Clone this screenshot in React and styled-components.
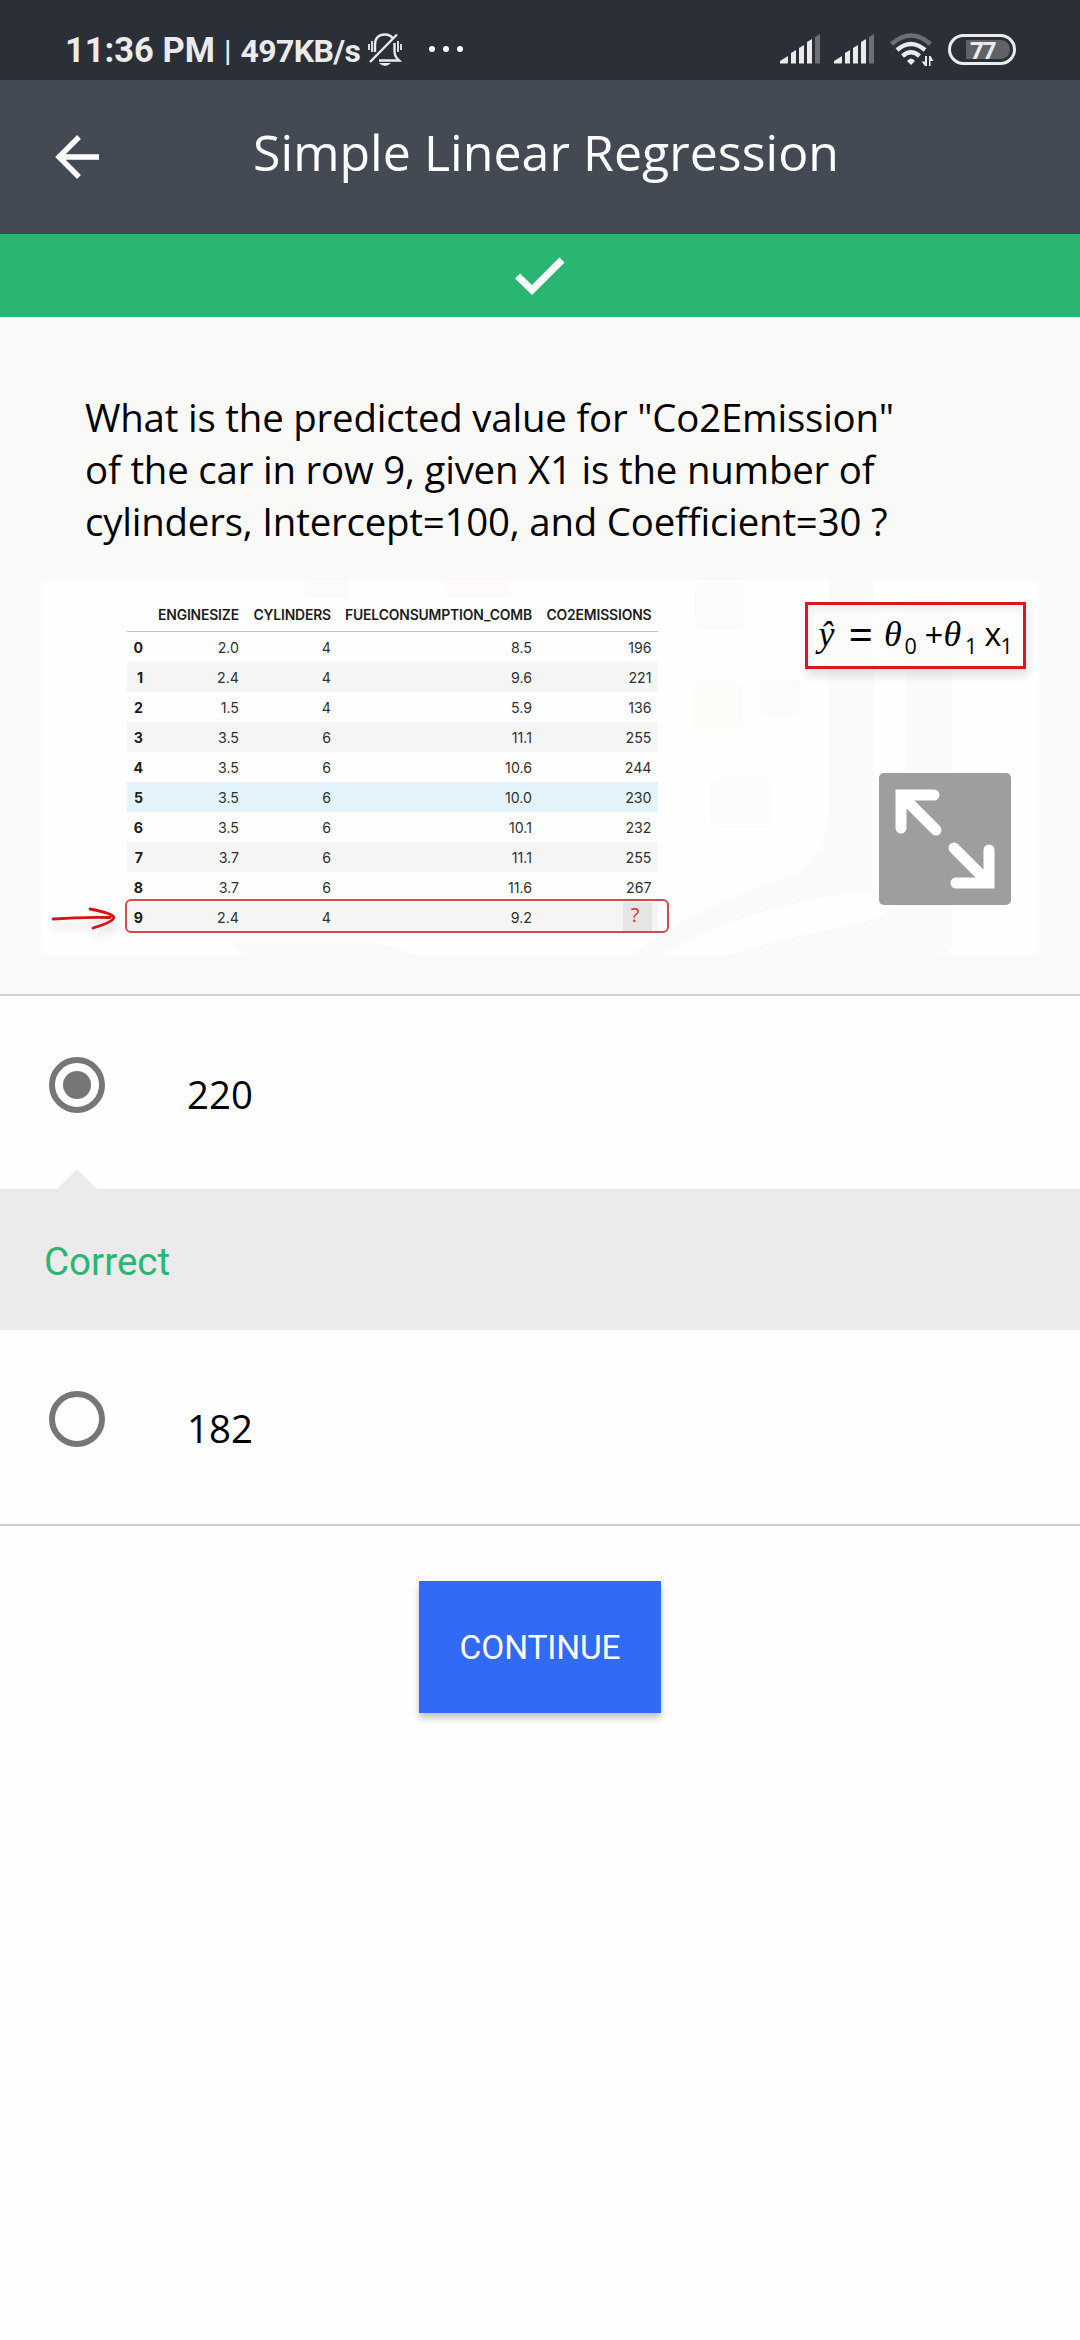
import React from "react";
import styled, { createGlobalStyle } from "styled-components";

const Global = createGlobalStyle`
  * { box-sizing: border-box; }
  body { margin: 0; background: #fefefe; }
`;

const Screen = styled.div`
  width: 1080px;
  min-height: 2340px;
  display: flex;
  flex-direction: column;
  background: #fefefe;
  font-family: "Open Sans", sans-serif;
  color: #000;
`;

const StatusBar = styled.header`
  height: 80px;
  padding: 20px 64px 0 65px;
  display: flex;
  align-items: center;
  justify-content: space-between;
  background: #2b2f37;
`;

const StatusGroup = styled.div`
  height: 60px;
  display: flex;
  align-items: center;
  padding-bottom: 2px;
`;

const StatusText = styled.span`
  font: ${(p) => p.$weight || 700} ${(p) => p.$size}px/40px Roboto, sans-serif;
  letter-spacing: ${(p) => p.$track || 0}px;
  margin-right: ${(p) => p.$gap || 0}px;
  padding-top: ${(p) => p.$drop || 0}px;
  color: #ebebeb;
  white-space: pre;
`;

const Glyph = styled.svg`
  display: block;
  flex: none;
  overflow: visible;
  margin-left: ${(p) => p.$ml || 0}px;
`;

const Battery = styled.div`
  width: 68px;
  height: 31px;
  margin-left: 15px;
  padding: 3px;
  display: flex;
  justify-content: flex-end;
  align-items: center;
  border: 3px solid #ebebeb;
  border-radius: 16px;
`;

const BatteryFill = styled.div`
  width: 44px;
  height: 19px;
  padding-left: 4px;
  border-radius: 1px 9px 9px 1px;
  background: #5f6267;
  color: #ebebeb;
  font: 700 24px/19px "Open Sans", sans-serif;
  letter-spacing: -1.2px;
`;

const AppBar = styled.div`
  height: 154px;
  padding-left: 55px;
  display: flex;
  background: #444a53;
`;

const BackIcon = styled(Glyph)`
  margin-top: 55px;
`;

const Title = styled.h1`
  margin: 38px 0 0 154px;
  font-weight: 400;
  font-size: 50px;
  line-height: 68px;
  letter-spacing: 0.05px;
  color: #fff;
  white-space: nowrap;
`;

const ResultBar = styled.div`
  height: 83px;
  display: flex;
  align-items: center;
  justify-content: center;
  background: #2bb573;
`;

const Question = styled.section`
  height: 679px;
  padding: 74px 41px 0;
  background: #f9f9f7;
  border-bottom: 2px solid #cfcfcd;
`;

const Prompt = styled.p`
  margin: 0 0 33px;
  padding-left: 44px;
  font-size: 38.4px;
  line-height: 52px;
  letter-spacing: -0.2px;
  white-space: pre-line;
`;

const Figure = styled.div`
  position: relative;
  width: 998px;
  height: 375px;
  padding: 20px 0 0 86px;
  background: #fefefe;
`;

const Backdrop = styled.svg`
  position: absolute;
  inset: 0;
`;

const Row = styled.div`
  position: relative;
  display: grid;
  grid-template-columns: 16px 96px 92px 201px 119.5px;
  width: 531px;
  height: ${(p) => (p.$head ? 32 : 30)}px;
  font: ${(p) => (p.$head ? "13.9px/31px" : "14.2px/31px")} Inter, sans-serif;
  color: #303030;
  text-align: right;
  background: ${(p) => p.$bg || "transparent"};
  border-bottom: ${(p) => (p.$head ? "1px solid #c4c4c4" : "0")};
`;

const Cell = styled.span`
  display: flex;
  justify-content: flex-end;
  white-space: nowrap;
  font-weight: ${(p) => p.$weight || 400};
  letter-spacing: ${(p) => (p.$weight === 600 ? "-0.15px" : "0")};
  color: ${(p) => (p.$weight ? "#1c1c1c" : "inherit")};
`;

const Unknown = styled.span`
  justify-self: end;
  width: 29px;
  height: 29px;
  padding-right: 4px;
  text-align: center;
  background: #e6e5e5;
  color: #d93030;
  font: 400 20px/26px "Open Sans", sans-serif;
`;

const RowOutline = styled.div`
  position: absolute;
  left: 84px;
  top: 319px;
  width: 544px;
  height: 34px;
  border: 2px solid #cf4c4f;
  border-radius: 6px;
`;

const Arrow = styled.svg`
  position: absolute;
  left: 9px;
  top: 322px;
  overflow: visible;
  filter: drop-shadow(1px 8px 5px rgba(0, 0, 0, 0.15));
`;

const Formula = styled.div`
  position: absolute;
  left: 764px;
  top: 22px;
  width: 221px;
  height: 67px;
  border: 3px solid #d8181e;
  background: rgba(252, 253, 253, 0.8);
  box-shadow: 2px 7px 9px rgba(0, 0, 0, 0.11), inset 1px 5px 9px rgba(0, 0, 0, 0.06);
`;

const FormulaText = styled.text`
  font-family: ${(p) => (p.$math ? '"Liberation Serif", serif' : '"Open Sans", sans-serif')};
  font-style: ${(p) => (p.$math ? "italic" : "normal")};
  font-size: ${(p) => p.$size}px;
`;

const Expand = styled.button`
  position: absolute;
  left: 838px;
  top: 193px;
  width: 132px;
  height: 132px;
  padding: 0;
  border: 0;
  border-radius: 5px;
  background: rgba(140, 140, 140, 0.84);
`;

const Option = styled.label`
  height: ${(p) => p.$height}px;
  padding: ${(p) => p.$top}px 0 0 49px;
  display: flex;
  background: #fefefe;
  border-bottom: ${(p) => (p.$last ? "2px solid #cdcdcd" : "0")};
`;

const Radio = styled.span`
  width: 56px;
  height: 56px;
  flex: none;
  display: grid;
  place-items: center;
  border: 6px solid #767676;
  border-radius: 50%;
  &::after {
    content: "";
    width: 28px;
    height: 28px;
    border-radius: 50%;
    background: ${(p) => (p.$on ? "#767676" : "transparent")};
  }
`;

const OptionText = styled.span`
  margin: 10px 0 0 82px;
  font-size: 38.4px;
  line-height: 54px;
`;

const Feedback = styled.div`
  position: relative;
  height: 141px;
  padding: 50px 0 0 44px;
  background: #ebebeb;
  color: #2bb573;
  font: 400 38.6px/46px Roboto, sans-serif;
  &::before {
    content: "";
    position: absolute;
    left: 57px;
    top: -20px;
    border: 20px solid transparent;
    border-top: 0;
    border-bottom-color: #ebebeb;
  }
`;

const Continue = styled.button`
  align-self: center;
  width: 242px;
  height: 132px;
  margin-top: 55px;
  padding: 2px 0 0;
  border: 0;
  background: #316af5;
  color: #fff;
  font: 400 33.5px/40px Roboto, sans-serif;
  letter-spacing: -0.15px;
  box-shadow: 0 5px 7px rgba(0, 0, 0, 0.24);
`;

const rows = [
  ["2.0", "4", "8.5", "196"],
  ["2.4", "4", "9.6", "221"],
  ["1.5", "4", "5.9", "136"],
  ["3.5", "6", "11.1", "255"],
  ["3.5", "6", "10.6", "244"],
  ["3.5", "6", "10.0", "230"],
  ["3.5", "6", "10.1", "232"],
  ["3.7", "6", "11.1", "255"],
  ["3.7", "6", "11.6", "267"],
  ["2.4", "4", "9.2", "?"],
];
const headings = ["ENGINESIZE", "CYLINDERS", "FUELCONSUMPTION_COMB", "CO2EMISSIONS"];

const rowColor = (i) => (i === 5 ? "#e3f4fc" : i % 2 ? "#f5f5f5" : undefined);

function Signal({ ml }) {
  return (
    <Glyph $ml={ml} width="40" height="30" viewBox="0 0 40 30">
      <g fill="#ebebeb">
        <path d="M0 27L8 22V28.5Q8 29.5 7 29.5H0Z" />
        <path d="M11 19L16 16V29.5H11Z" />
        <path d="M19 14L24 11V29.5H19Z" />
        <path d="M27 8L32 5V29.5H27Z" />
      </g>
      <path d="M35 3L40 0V29.5H35Z" fill="#6c6f74" />
    </Glyph>
  );
}

export default function App() {
  return (
    <Screen>
      <Global />
      <StatusBar>
        <StatusGroup>
          <StatusText $size={34.5} $gap={9} $drop={2}>11:36 PM</StatusText>
          <StatusText $size={30} $gap={9} $drop={3} $weight={500}>|</StatusText>
          <StatusText $size={32} $track={-0.6} $drop={4}>497KB/s</StatusText>
          <Glyph $ml={8} width="34" height="33" viewBox="0 0 34 33">
            <g fill="none" stroke="#ebebeb" strokeWidth="2.4">
              <path d="M7 19V12Q7 1.5 17 1.5Q22 1.5 24.5 5M26.5 10V19Q27 24 31 27.5H11M2 29L29 1.5" />
              <path d="M1 11V17M4 8V19M30 8V19M33 11V17" strokeWidth="1.8" />
            </g>
            <path d="M11 30H23Q17 36 11 30Z" fill="#ebebeb" />
          </Glyph>
          <Glyph $ml={27} width="34" height="8" viewBox="0 0 34 8" fill="#fff">
            <circle cx="3" cy="4" r="3" />
            <circle cx="17" cy="4" r="3" />
            <circle cx="31" cy="4" r="3" />
          </Glyph>
        </StatusGroup>
        <StatusGroup>
          <Signal />
          <Signal ml={14} />
          <Glyph $ml={16} width="43" height="33" viewBox="0 0 43 33">
            <g fill="none" strokeWidth="4.4">
              <path d="M1.5 11Q21 -6 40.5 11" stroke="#6c6f74" />
              <path d="M7 17Q21 5 35 17" stroke="#ebebeb" />
              <path d="M12.5 23Q21 15.5 29.5 23" stroke="#ebebeb" />
            </g>
            <path d="M17 28Q21 23 25 28L21 32Z" fill="#ebebeb" />
            <path d="M35 23V33H37V23ZM39 23H40.5V33H39ZM31.5 28.5H35V33ZM40.5 23L43.5 28H40.5Z" fill="#ebebeb" />
          </Glyph>
          <Battery>
            <BatteryFill>77</BatteryFill>
          </Battery>
        </StatusGroup>
      </StatusBar>

      <AppBar>
        <BackIcon width="44" height="44" viewBox="0 0 44 44">
          <path d="M24 2L4 22L24 42M4 22H44" fill="none" stroke="#fff" strokeWidth="5.4" />
        </BackIcon>
        <Title>Simple Linear Regression</Title>
      </AppBar>

      <ResultBar>
        <Glyph width="50" height="38" viewBox="0 0 50 38">
          <path d="M2.5 19L17 33L47 3" fill="none" stroke="#fff" strokeWidth="7.2" />
        </Glyph>
      </ResultBar>

      <Question>
        <Prompt>
          {'What is the predicted value for "Co2Emission"\nof the car in row 9, given X1 is the number of\ncylinders, Intercept=100, and Coefficient=30 ?'}
        </Prompt>
        <Figure>
          <Backdrop width="998" height="375" viewBox="0 0 998 375">
            <rect x="264" width="44" height="18" fill="#fbfbfb" />
            <rect x="404" width="65" height="17" fill="#fefafb" />
            <rect x="653" y="3" width="51" height="46" rx="8" fill="#fdfafb" />
            <rect x="650" y="102" width="52" height="48" rx="8" fill="#fcfcf8" />
            <rect x="718" y="99" width="40" height="37" rx="7" fill="#fdfafb" />
            <rect x="670" y="198" width="62" height="50" rx="8" fill="#fcfcfc" />
            <path d="M788 0H833V310C770 318 700 330 620 375H590C660 325 710 310 755 294Q780 280 788 240Z" fill="#fafafa" />
            <path d="M865 20H911V364Q908 375 895 375H690C760 350 820 350 850 330Q865 320 865 295Z" fill="#fafafa" />
            <path d="M189 362H330Q356 366 372 375H210Q192 372 189 362Z" fill="#fafafa" />
          </Backdrop>
          <Row $head>
            <Cell />
            {headings.map((h) => (
              <Cell $weight={600} key={h}>{h}</Cell>
            ))}
          </Row>
          {rows.map((r, i) => (
            <Row key={i} $bg={rowColor(i)}>
              <Cell $weight={700}>{i}</Cell>
              {r.map((v, j) => (v === "?" ? <Unknown key={j}>?</Unknown> : <Cell key={j}>{v}</Cell>))}
            </Row>
          ))}
          <RowOutline />
          <Arrow width="66" height="28" viewBox="0 0 66 28" fill="none" stroke="#d81115" strokeWidth="2.8" strokeLinecap="round">
            <path d="M3 17Q30 15 60 15.5M40 7Q62 11 64 15.5Q63 20 43 26" />
          </Arrow>
          <Formula>
            <Glyph width="215" height="61" viewBox="0.5 0.5 215 61">
              <FormulaText $math $size={36} x="11" y="41">ŷ</FormulaText>
              <FormulaText $size={43} x="41" y="46">=</FormulaText>
              <FormulaText $math $size={36} x="76.5" y="41">θ</FormulaText>
              <FormulaText $size={21.5} x="97" y="49.5">0</FormulaText>
              <FormulaText $size={33} x="117" y="42.5">+</FormulaText>
              <FormulaText $math $size={36} x="136" y="41">θ</FormulaText>
              <FormulaText $size={21.5} x="157.5" y="49.5">1</FormulaText>
              <FormulaText $size={32} x="177" y="41">x</FormulaText>
              <FormulaText $size={21.5} x="193" y="49.5">1</FormulaText>
            </Glyph>
          </Formula>
          <Expand aria-label="Expand image">
            <Glyph width="132" height="132" viewBox="0 0 132 132">
              <g fill="none" stroke="#fff" strokeWidth="11" strokeLinecap="round">
                <path d="M22 22L57 57M22 55V22H55M75 75L110 110M110 77V110H77" />
              </g>
            </Glyph>
          </Expand>
        </Figure>
      </Question>

      <Option $height={193} $top={61}>
        <Radio $on />
        <OptionText>220</OptionText>
      </Option>
      <Feedback>Correct</Feedback>
      <Option $height={196} $top={61} $last>
        <Radio />
        <OptionText>182</OptionText>
      </Option>
      <Continue>CONTINUE</Continue>
    </Screen>
  );
}
